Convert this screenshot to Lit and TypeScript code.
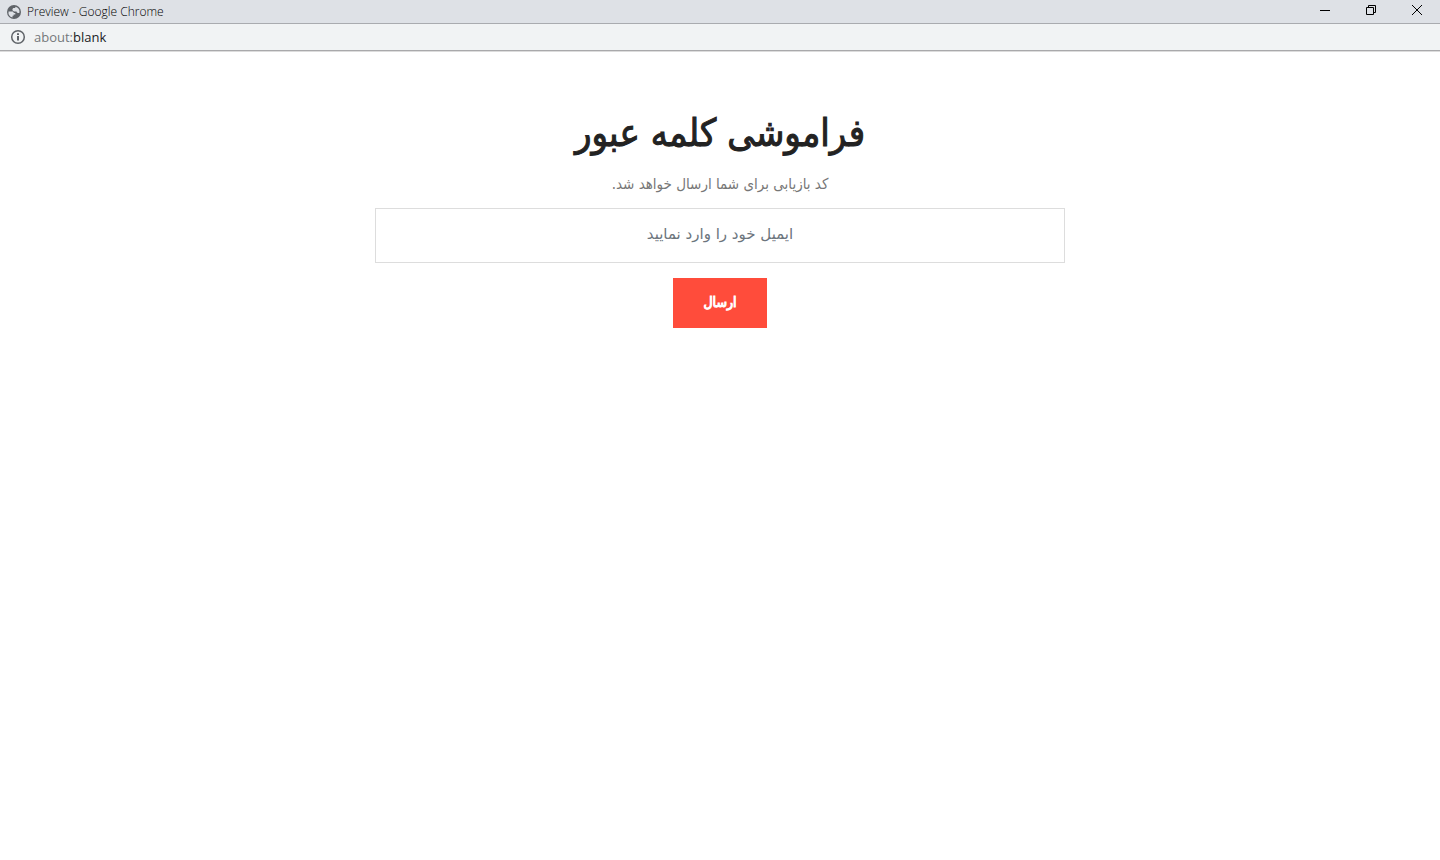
import { LitElement, html, css } from "lit";
import { customElement } from "lit/decorators.js";

@customElement("window-chrome")
class WindowChrome extends LitElement {
  static styles = css`
    :host { display: block; font-family: "Open Sans", "Noto Sans", sans-serif; color: #000; }
    .titlebar { display: flex; align-items: center; height: 23px; background: #dee1e6; border-bottom: 1px solid #a9abaf; }
    .globe { display: block; margin-left: 7px; flex: none; }
    .title { flex: 1; margin-left: 6px; font-size: 12px; font-weight: 300; line-height: 22px; white-space: nowrap; }
    .controls { display: flex; align-self: stretch; }
    .control { display: flex; justify-content: center; align-items: center; width: 46px; padding: 0 0 3px; border: 0; background: none; }
    .address { display: flex; align-items: center; height: 26px; background: #f1f3f4; border-bottom: 1px solid #a9a9ab; box-shadow: 0 1px #dcdcdc; }
    .info { display: block; margin-left: 10px; flex: none; }
    .url { margin-left: 8px; font-size: 13px; line-height: 26px; color: #202124; }
    .scheme { color: #75787b; }
  `;

  render() {
    return html`
      <div class="titlebar">
        <svg class="globe" width="14" height="14" viewBox="0 0 14 14" aria-hidden="true">
          <circle cx="7" cy="7" r="7" fill="#5f6368" />
          <path d="M1.5 6.4h3.3c1.3 0 2 .7 2 1.7h1.5v1.5H6.6v1.2H5.5v1.6A5.5 5.5 0 0 1 1.5 6.4ZM8.3 1.7A5.5 5.5 0 0 1 12.5 7.4c-.7.9-2.3.8-2.7-.2L9.5 6.4H7.4c-1.2 0-2-.8-2-1.8 0-.9.7-1.5 1.6-1.5h1.3Z" fill="#dee1e6" />
        </svg>
        <span class="title">Preview - Google Chrome</span>
        <div class="controls">
          <button class="control" aria-label="Minimize">
            <svg width="10" height="10" viewBox="0 0 10 10"><path d="M0 5.5h10" stroke="#000" fill="none" /></svg>
          </button>
          <button class="control" aria-label="Restore">
            <svg width="10" height="10" viewBox="0 0 10 10"><path d="M.5 2.5h7v7h-7zM2.5 2.5v-2h7v7h-2" stroke="#000" fill="none" /></svg>
          </button>
          <button class="control" aria-label="Close">
            <svg width="10" height="10" viewBox="0 0 10 10"><path d="m0 0 10 10M10 0 0 10" stroke="#000" fill="none" /></svg>
          </button>
        </div>
      </div>
      <div class="address">
        <svg class="info" width="16" height="16" viewBox="0 0 16 16" aria-hidden="true">
          <circle cx="8" cy="8" r="6.3" fill="none" stroke="#5f6368" stroke-width="1.5" />
          <path d="M7 7h2v4.5H7zM7 4.3h2V6H7z" fill="#5f6368" />
        </svg>
        <span class="url"><span class="scheme">about:</span>blank</span>
      </div>
    `;
  }
}

@customElement("app-root")
class AppRoot extends LitElement {
  static styles = css`
    :host { display: block; min-height: 100vh; background: #fff; font-family: "DejaVu Sans Condensed", "DejaVu Sans", sans-serif; }
    .page { box-sizing: border-box; max-width: 720px; margin: 0 auto; padding: 58px 15px 0; text-align: center; }
    .heading { margin: 0; font-size: 38px; line-height: 48px; font-weight: 400; color: #222; -webkit-text-stroke: 1px #222; }
    .note { margin: 15px 0 12px; font-size: 15px; line-height: 24px; color: #777; }
    .form { display: flex; flex-direction: column; align-items: center; gap: 15px; }
    .email { box-sizing: border-box; width: 100%; height: 55px; padding: 0 20px 4px; border: 1px solid #ddd; border-radius: 0; background: #fff; font: 15px "DejaVu Sans", sans-serif; text-align: center; color: #444; }
    .email::placeholder { color: #6c757d; opacity: 1; }
    .send { height: 50px; padding: 0 30px 2px; border: 0; background: #ff4c3b; color: #fff; font: 400 14px "DejaVu Sans Condensed", "DejaVu Sans", sans-serif; -webkit-text-stroke: 1px #fff; }
  `;

  render() {
    return html`
      <window-chrome></window-chrome>
      <main class="page" dir="rtl" lang="fa">
        <h1 class="heading">فراموشی کلمه عبور</h1>
        <p class="note">کد بازیابی برای شما ارسال خواهد شد.</p>
        <form class="form" @submit=${(e: Event) => e.preventDefault()}>
          <input class="email" type="email" aria-label="ایمیل" placeholder="ایمیل خود را وارد نمایید" />
          <button class="send" type="submit">ارسال</button>
        </form>
      </main>
    `;
  }
}
